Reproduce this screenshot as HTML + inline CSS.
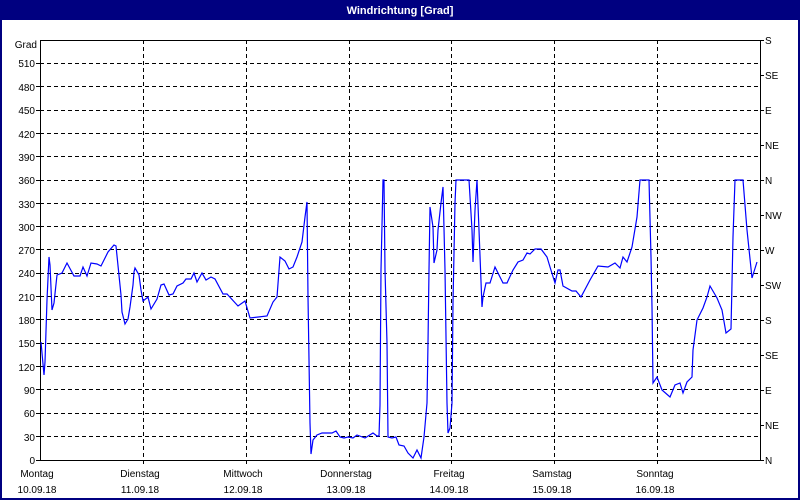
<!DOCTYPE html>
<html><head><meta charset="utf-8"><style>
html,body{margin:0;padding:0;width:800px;height:500px;overflow:hidden;background:#fff}
svg{display:block}
text{font-family:"Liberation Sans",sans-serif;font-size:10px;fill:#000}
</style></head><body>
<svg width="800" height="500" xmlns="http://www.w3.org/2000/svg">
<rect x="0" y="0" width="800" height="500" fill="#000080"/>
<rect x="2" y="20" width="796" height="478" fill="#fff"/>
<text x="400" y="14" text-anchor="middle" style="font-weight:bold;fill:#fff;font-size:11px">Windrichtung [Grad]</text>
<g stroke="#000" stroke-width="1" stroke-dasharray="4,3" shape-rendering="crispEdges">
<line x1="40" y1="436.5" x2="760" y2="436.5"/><line x1="40" y1="413.5" x2="760" y2="413.5"/>
<line x1="40" y1="389.5" x2="760" y2="389.5"/><line x1="40" y1="366.5" x2="760" y2="366.5"/>
<line x1="40" y1="343.5" x2="760" y2="343.5"/><line x1="40" y1="319.5" x2="760" y2="319.5"/>
<line x1="40" y1="296.5" x2="760" y2="296.5"/><line x1="40" y1="273.5" x2="760" y2="273.5"/>
<line x1="40" y1="249.5" x2="760" y2="249.5"/><line x1="40" y1="226.5" x2="760" y2="226.5"/>
<line x1="40" y1="203.5" x2="760" y2="203.5"/><line x1="40" y1="180.5" x2="760" y2="180.5"/>
<line x1="40" y1="156.5" x2="760" y2="156.5"/><line x1="40" y1="133.5" x2="760" y2="133.5"/>
<line x1="40" y1="110.5" x2="760" y2="110.5"/><line x1="40" y1="86.5" x2="760" y2="86.5"/>
<line x1="40" y1="63.5" x2="760" y2="63.5"/>
<line x1="143.5" y1="40" x2="143.5" y2="465"/><line x1="246.5" y1="40" x2="246.5" y2="465"/>
<line x1="349.5" y1="40" x2="349.5" y2="465"/><line x1="451.5" y1="40" x2="451.5" y2="465"/>
<line x1="554.5" y1="40" x2="554.5" y2="465"/><line x1="657.5" y1="40" x2="657.5" y2="465"/>
</g>
<g stroke="#000" stroke-width="1" shape-rendering="crispEdges" fill="none">
<rect x="40.5" y="40.5" width="720" height="420"/>
<path d="M36 460.5h4M36 436.5h4M36 413.5h4M36 389.5h4M36 366.5h4M36 343.5h4M36 319.5h4M36 296.5h4M36 273.5h4M36 249.5h4M36 226.5h4M36 203.5h4M36 180.5h4M36 156.5h4M36 133.5h4M36 110.5h4M36 86.5h4M36 63.5h4"/>
<path d="M760 460.5h4M760 425.5h4M760 390.5h4M760 355.5h4M760 320.5h4M760 285.5h4M760 250.5h4M760 215.5h4M760 180.5h4M760 145.5h4M760 110.5h4M760 75.5h4M760 40.5h4"/>
</g>
<g text-anchor="end">
<text x="37" y="48">Grad</text>
<text x="35" y="464">0</text><text x="35" y="441">30</text><text x="35" y="417">60</text><text x="35" y="394">90</text>
<text x="35" y="371">120</text><text x="35" y="347">150</text><text x="35" y="324">180</text><text x="35" y="301">210</text>
<text x="35" y="277">240</text><text x="35" y="254">270</text><text x="35" y="231">300</text><text x="35" y="208">330</text>
<text x="35" y="184">360</text><text x="35" y="161">390</text><text x="35" y="138">420</text><text x="35" y="114">450</text>
<text x="35" y="91">480</text><text x="35" y="67">510</text>
</g>
<g>
<text x="765" y="464">N</text><text x="765" y="429">NE</text><text x="765" y="394">E</text><text x="765" y="359">SE</text>
<text x="765" y="324">S</text><text x="765" y="289">SW</text><text x="765" y="254">W</text><text x="765" y="219">NW</text>
<text x="765" y="184">N</text><text x="765" y="149">NE</text><text x="765" y="114">E</text><text x="765" y="79">SE</text>
<text x="765" y="44">S</text>
</g>
<g text-anchor="middle">
<text x="37" y="477">Montag</text><text x="37" y="493">10.09.18</text>
<text x="140" y="477">Dienstag</text><text x="140" y="493">11.09.18</text>
<text x="243" y="477">Mittwoch</text><text x="243" y="493">12.09.18</text>
<text x="346" y="477">Donnerstag</text><text x="346" y="493">13.09.18</text>
<text x="449" y="477">Freitag</text><text x="449" y="493">14.09.18</text>
<text x="552" y="477">Samstag</text><text x="552" y="493">15.09.18</text>
<text x="655" y="477">Sonntag</text><text x="655" y="493">16.09.18</text>
</g>
<polyline fill="none" stroke="#0000ff" stroke-width="1.2" points="41,342 44,375 45,362 47,300 49,257 50,265 52,310 54,303 57,275 62,273 67,263 74,276 80,276 83,267 87,276 91,263 97,264 101,266 108,252 114,245 116,246 121,295 122,312 125,324 128,319 130,307 133,285 134,272 135,268 139,275 141,290 143,301 148,297 151,309 157,299 161,285 164,284 169,295 173,294 177,286 183,283 186,279 191,279 194,273 197,282 202,273 206,280 211,277 215,279 223,294 227,294 238,306 245,301 250,318 267,316 273,302 277,297 280,257 285,261 289,269 293,267 297,257 302,242 305,217 307,202 308,297 309,360 310,423 311,454 313,440 317,435 322,433 332,433 336,431 340,437 344,438 348,437 353,438 357,435 365,438 373,433 377,436 379,436 380,405 381,270 383,180 384,180 385,270 387,343 388,437 392,438 396,437 399,445 404,446 408,453 413,458 417,450 421,458 424,437 427,403 428,343 429,270 430,207 433,227 434,263 437,250 438,230 441,203 443,187 445,270 447,403 448,433 450,428 452,403 453,303 455,203 456,180 469,180 472,230 473,262 475,210 477,180 479,230 482,307 483,297 486,283 490,283 495,267 503,283 507,283 513,270 518,262 523,260 527,253 530,254 535,249 541,249 547,257 550,267 555,283 558,270 560,270 563,286 572,291 576,291 581,297 590,280 598,266 608,267 615,263 620,268 623,257 627,262 632,247 637,217 640,180 649,180 651,257 652,307 653,383 657,377 662,390 670,397 675,385 680,383 683,393 687,382 692,377 693,350 697,320 703,308 707,297 710,286 717,298 722,310 726,333 731,329 733,237 735,180 743,180 747,230 752,278 757,262"/>
</svg>
</body></html>
